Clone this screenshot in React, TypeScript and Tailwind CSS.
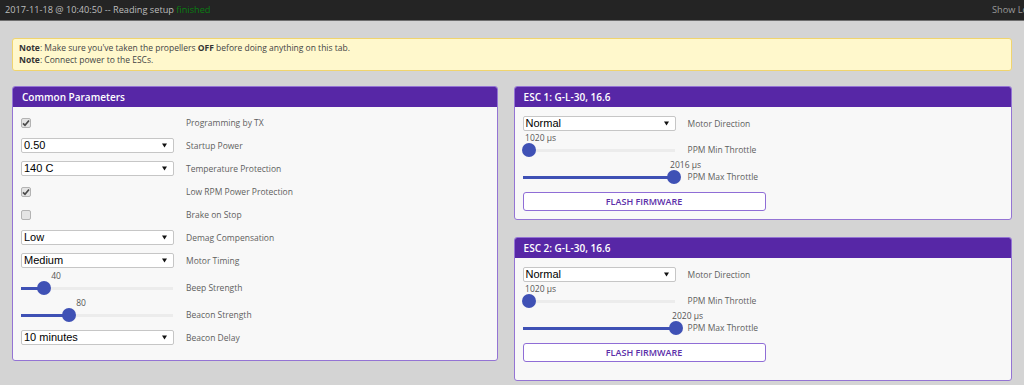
import React from 'react';

type Row =
  | { kind: 'check'; checked: boolean; label: string }
  | { kind: 'select'; value: string; label: string }
  | { kind: 'slider'; value: string; pos: number; label: string };

const commonRows: Row[] = [
  { kind: 'check', checked: true, label: 'Programming by TX' },
  { kind: 'select', value: '0.50', label: 'Startup Power' },
  { kind: 'select', value: '140 C', label: 'Temperature Protection' },
  { kind: 'check', checked: true, label: 'Low RPM Power Protection' },
  { kind: 'check', checked: false, label: 'Brake on Stop' },
  { kind: 'select', value: 'Low', label: 'Demag Compensation' },
  { kind: 'select', value: 'Medium', label: 'Motor Timing' },
  { kind: 'slider', value: '40', pos: 23, label: 'Beep Strength' },
  { kind: 'slider', value: '80', pos: 48, label: 'Beacon Strength' },
  { kind: 'select', value: '10 minutes', label: 'Beacon Delay' },
];

const escs = [
  { title: 'ESC 1: G-L-30, 16.6', max: '2016 µs', maxPos: 151, extra: false },
  { title: 'ESC 2: G-L-30, 16.6', max: '2020 µs', maxPos: 153, extra: true },
];

const Check = ({ checked }: { checked: boolean }) => (
  <div className="w-[10px] h-[10px] rounded-[2px] border border-[#b3b3b3] bg-[#e4e4e4] flex items-center justify-center">
    {checked && (
      <svg width="8" height="8" viewBox="0 0 8 8">
        <path d="M1 4.3 L3 6.3 L7 1.5" fill="none" stroke="#4a4a4a" strokeWidth="1.7" />
      </svg>
    )}
  </div>
);

const Select = ({ value }: { value: string }) => (
  <div className="w-[153px] h-[15px] bg-white border border-[#c6c6c6] rounded-[2px] flex items-center justify-between pl-[2px] pr-[6px] font-['Liberation_Sans',Arial,sans-serif] text-[11px] leading-none text-black">
    <span>{value}</span>
    <svg width="5" height="5" viewBox="0 0 5 5">
      <path d="M0 0.5 H5 L2.5 4.5 Z" fill="#111" />
    </svg>
  </div>
);

const Slider = ({ value, pos }: { value: string; pos: number }) => (
  <div className="relative w-[152px] h-[14px]">
    <div className="absolute left-0 right-0 top-[6px] h-[3px] bg-[#ececec]" />
    <div className="absolute left-0 top-[6px] h-[3px] bg-[#3f51b5]" style={{ width: pos }} />
    <div className="absolute top-0 w-[14px] h-[14px] rounded-full bg-[#3f51b5]" style={{ left: pos - 7 }} />
    <span
      className="absolute top-[-10px] -translate-x-1/2 text-[8.5px] leading-[10px] text-[#555] whitespace-nowrap"
      style={{ left: pos + 12 }}
    >
      {value}
    </span>
  </div>
);

const Label = ({ children }: { children: React.ReactNode }) => (
  <span className="text-[8.5px] leading-[14px] text-[#5f5f5f] whitespace-nowrap">{children}</span>
);

const ParamRow = ({ row, sliderPad = 'pt-[9px]' }: { row: Row; sliderPad?: string }) => {
  if (row.kind === 'slider') {
    return (
      <div className={`flex h-[27px] items-start ${sliderPad}`}>
        <div className="w-[165px] shrink-0">
          <Slider value={row.value} pos={row.pos} />
        </div>
        <Label>{row.label}</Label>
      </div>
    );
  }
  return (
    <div className="flex h-[23px] items-center">
      <div className="w-[165px] shrink-0">
        {row.kind === 'check' ? <Check checked={row.checked} /> : <Select value={row.value} />}
      </div>
      <Label>{row.label}</Label>
    </div>
  );
};

const Panel = ({ title, className, children }: { title: string; className?: string; children: React.ReactNode }) => (
  <div className={`border border-[#9474d4] rounded-[3px] bg-[#f8f8f8] overflow-hidden ${className ?? ''}`}>
    <div className="h-[20px] bg-[#5727a6] px-[9px] flex items-center text-white font-semibold text-[10px]">{title}</div>
    {children}
  </div>
);

export default function App() {
  return (
    <div className="w-[1024px] h-[385px] overflow-hidden bg-[#d4d4d4] font-['Open_Sans',sans-serif]">
      <div className="h-[21px] bg-[#242424] border-b border-[#6e6e6e] flex items-center justify-between pl-[5px] overflow-hidden">
        <span className="text-[9.2px] text-[#bdbdbd] whitespace-nowrap">
          2017-11-18 @ 10:40:50 -- Reading setup <span className="text-[#0a7d12]">finished</span>
        </span>
        <span className="text-[9.2px] text-[#9a9a9a] whitespace-nowrap mr-[-9px]">Show Log</span>
      </div>

      <div className="px-[12px] pt-[17px]">
        <div className="h-[33px] border border-[#f0d46e] bg-[#fff8cc] rounded-[3px] px-[6px] py-[3px] text-[8.5px] leading-[12px] text-[#444]">
          <div>
            <b className="text-[#333]">Note</b>: Make sure you've taken the propellers <b className="text-[#333]">OFF</b> before doing anything on this tab.
          </div>
          <div>
            <b className="text-[#333]">Note</b>: Connect power to the ESCs.
          </div>
        </div>

        <div className="flex gap-[16px] mt-[15px] items-start">
          <Panel title="Common Parameters" className="w-[489px] h-[275px]">
            <div className="pl-[8px] pt-[4px]">
              {commonRows.map((r) => (
                <ParamRow key={r.label} row={r} />
              ))}
            </div>
          </Panel>

          <div className="w-[502px] flex flex-col gap-[17px]">
            {escs.map((e) => (
              <Panel key={e.title} title={e.title}>
                <div className={`pl-[8px] pt-[5px] ${e.extra ? 'pb-[18px]' : 'pb-[8px]'}`}>
                  <ParamRow row={{ kind: 'select', value: 'Normal', label: 'Motor Direction' }} />
                  <ParamRow row={{ kind: 'slider', value: '1020 µs', pos: 6, label: 'PPM Min Throttle' }} sliderPad="pt-[8px]" />
                  <ParamRow row={{ kind: 'slider', value: e.max, pos: e.maxPos, label: 'PPM Max Throttle' }} sliderPad="pt-[8px]" />
                  <button className="mt-[3px] w-[243px] h-[19px] border border-[#8f6dd6] rounded-[3px] bg-white text-[#5b2ea8] font-semibold text-[9px] flex items-center justify-center">
                    FLASH FIRMWARE
                  </button>
                </div>
              </Panel>
            ))}
          </div>
        </div>
      </div>
    </div>
  );
}
